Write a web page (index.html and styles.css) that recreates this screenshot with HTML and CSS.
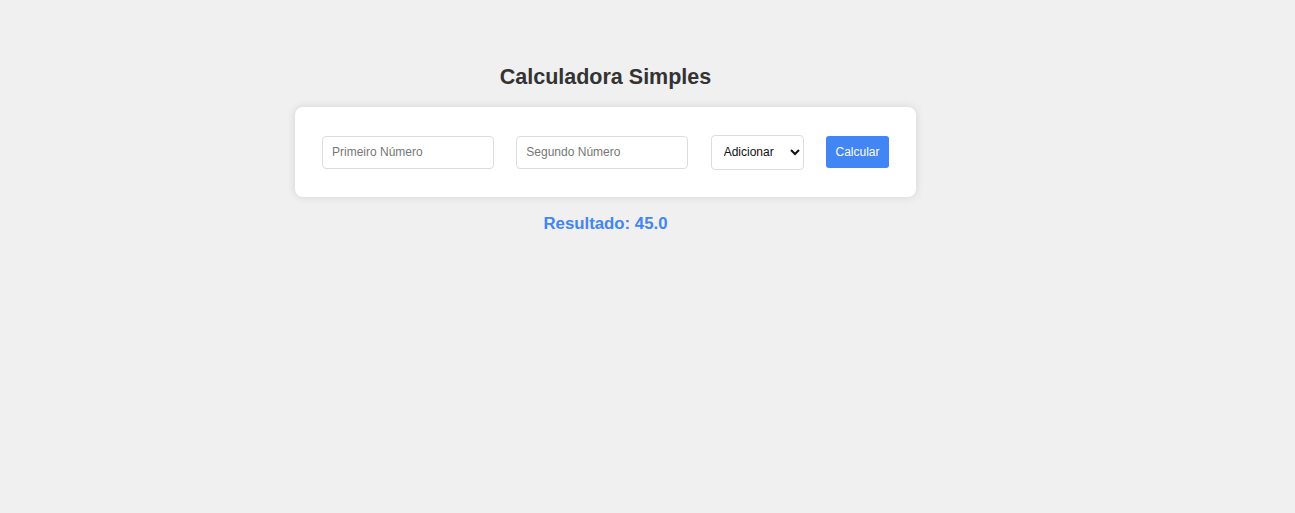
FILE: index.html
```html
<!DOCTYPE html>
<html lang="pt">
<head>
<meta charset="utf-8">
<title>Calculadora Simples</title>
<link rel="stylesheet" href="styles.css">
</head>
<body>
<main class="page">
  <h1 class="title">Calculadora Simples</h1>
  <form class="card">
    <input class="field" type="text" placeholder="Primeiro Número">
    <input class="field" type="text" placeholder="Segundo Número">
    <select class="op">
      <option>Adicionar</option>
      <option>Subtrair</option>
      <option>Multiplicar</option>
      <option>Dividir</option>
    </select>
    <button class="btn" type="button">Calcular</button>
  </form>
  <p class="result">Resultado: 45.0</p>
</main>
</body>
</html>
```

FILE: styles.css
```css
html, body {
  margin: 0;
  padding: 0;
  background: #f0f0f0;
  font-family: "Liberation Sans", Arial, sans-serif;
}
.page {
  width: 1211px;
  display: flex;
  flex-direction: column;
  align-items: center;
  padding-top: 64px;
}
.title {
  margin: 0;
  font-size: 21.5px;
  font-weight: bold;
  color: #333;
  line-height: 27px;
}
.card {
  margin-top: 16px;
  box-sizing: border-box;
  width: 621px;
  height: 90px;
  padding: 0 27px;
  background: #fff;
  border-radius: 8px;
  box-shadow: 0 0 8px rgba(0, 0, 0, 0.12);
  display: flex;
  align-items: center;
  justify-content: space-between;
}
.field {
  box-sizing: border-box;
  width: 172px;
  height: 33px;
  padding: 0 9px;
  border: 1px solid #ddd;
  border-radius: 4px;
  font-family: "Liberation Sans", Arial, sans-serif;
  font-size: 12px;
  color: #333;
  outline: none;
}
.field::placeholder {
  color: #777;
}
.op {
  box-sizing: border-box;
  width: 93px;
  height: 35px;
  padding: 0 4px 0 8px;
  border: 1px solid #ddd;
  border-radius: 4px;
  background: #fff;
  font-family: "Liberation Sans", Arial, sans-serif;
  font-size: 12px;
  color: #111;
}
.btn {
  box-sizing: border-box;
  width: 63px;
  height: 32px;
  border: none;
  border-radius: 3px;
  background: #4285f4;
  color: #fff;
  font-family: "Liberation Sans", Arial, sans-serif;
  font-size: 12px;
  padding: 0;
}
.result {
  margin: 16px 0 0;
  font-size: 16.8px;
  font-weight: bold;
  color: #4285f4;
  line-height: 22px;
}
```
